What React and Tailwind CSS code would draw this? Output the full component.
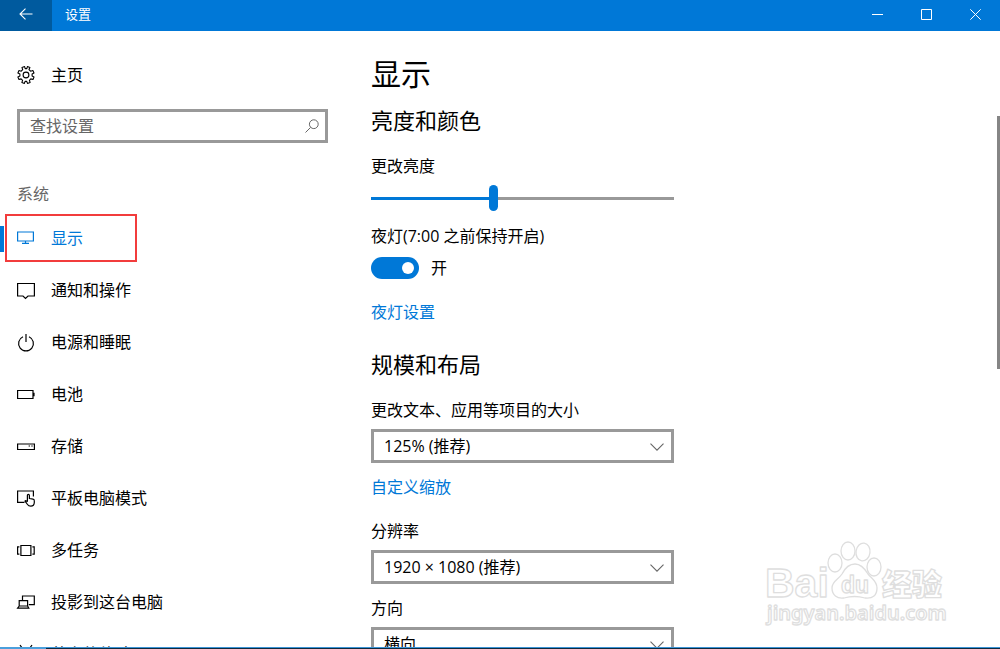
import { useState } from 'react'

const Icon = ({ children, className = '' }) => (
  <svg
    width="20"
    height="20"
    viewBox="0 0 20 20"
    fill="none"
    stroke="currentColor"
    strokeWidth="1.2"
    className={`shrink-0 ${className}`}
    aria-hidden="true"
  >
    {children}
  </svg>
)

const GearIcon = () => (
  <Icon>
    <path
      strokeLinejoin="round"
      strokeWidth="1.1"
      d="M8.6 1.6 L9.2 3.6 L10.8 3.6 L11.4 1.6 L13.9 2.6 L13 4.6 L14.6 6.2 L16.9 5.5 L18 7.9 L16.1 8.9 L16.1 11 L18 12 L17 14.5 L14.8 13.9 L13.4 15.3 L14.1 17.4 L11.5 18.4 L10.7 16.4 L9.1 16.4 L8.4 18.4 L5.9 17.4 L6.6 15.3 L5.1 13.9 L3 14.5 L1.9 12 L3.9 11 L3.9 8.9 L1.9 7.9 L3 5.5 L5.2 6.2 L6.7 4.6 L6 2.6 Z"
    />
    <circle cx="10" cy="10" r="2.9" strokeWidth="1.1" />
  </Icon>
)

const menu = [
  {
    name: '显示',
    icon: <path d="M1.6 4 H17.4 V13 H1.6 Z M9.5 13 V15 M6 15.3 H13" />,
  },
  {
    name: '通知和操作',
    icon: <path d="M1.6 3.5 H18.4 V16 H12 L9.5 18.5 L7 16 H1.6 Z" />,
  },
  {
    name: '电源和睡眠',
    icon: <path d="M7 4.7 A7.4 7.4 0 1 0 13 4.7 M10 2 V10" />,
  },
  {
    name: '电池',
    icon: <path d="M1.6 6.5 H17 V14.5 H1.6 Z M18 8.8 V12.2" />,
  },
  {
    name: '存储',
    icon: (
      <>
        <path d="M1.6 8 H18.4 V13.5 H1.6 Z" />
        <path d="M12.6 10 H14 M15.3 10 H16.7" />
      </>
    ),
  },
  {
    name: '平板电脑模式',
    icon: (
      <>
        <path d="M8.5 14.3 H1.6 V3 H17.4 V8.5" />
        <path
          strokeLinejoin="round"
          d="M11.4 13.7 V7.4 Q11.4 6.3 12.4 6.3 Q13.4 6.3 13.4 7.4 V10.5 L17 11.2 Q18.4 11.5 18.3 12.9 V14.5 Q18.2 18.1 14.8 18.1 Q12.6 18.1 11.5 16.5 L9 13.1 Q9.6 12.1 11.4 13.7"
        />
      </>
    ),
  },
  {
    name: '多任务',
    icon: <path d="M4.9 5.5 H14.9 V15.5 H4.9 Z M3.4 6.8 H1.6 V14.2 H3.4 M16.4 6.8 H18.2 V14.2 H16.4" />,
  },
  {
    name: '投影到这台电脑',
    icon: (
      <>
        <path d="M6.5 8 V4 H18.3 V12.6 H12.8" />
        <path d="M3.2 8.6 H11.6 V14 H3.2 Z M3.2 14 L1.6 16.2 H12.8 L11.6 14" />
      </>
    ),
  },
  {
    name: '共享的体验',
    icon: <path d="M4 1 L16 18 M16 1 L4 18" />,
  },
]

const Dropdown = ({ id, label, options }) => (
  <>
    <label htmlFor={id} className="block leading-6">
      {label}
    </label>
    <div className="relative mt-[7px]">
      <select
        id={id}
        className="block h-[34px] w-full appearance-none border-3 border-[#999999] bg-white pl-2.5 pr-10 leading-6 outline-none"
      >
        {options.map((option) => (
          <option key={option}>{option}</option>
        ))}
      </select>
      <svg
        width="14"
        height="8"
        viewBox="0 0 14 8"
        fill="none"
        stroke="#666"
        strokeWidth="1.1"
        className="pointer-events-none absolute right-[10px] top-[14px]"
        aria-hidden="true"
      >
        <path d="M0.5 0.7 L7 7.2 L13.5 0.7" />
      </svg>
    </div>
  </>
)

const Watermark = () => (
  <svg
    width="190"
    height="92"
    viewBox="0 0 190 92"
    className="pointer-events-none absolute bottom-[17px] right-[50px]"
    fill="#fff"
    stroke="#dedede"
    strokeWidth="1.3"
    strokeLinejoin="round"
  >
    <text x="5" y="59" fontFamily="'Liberation Sans', sans-serif" fontWeight="700" fontSize="41">
      Bai
    </text>
    <g>
      <ellipse cx="75" cy="25" rx="7" ry="9" />
      <ellipse cx="88" cy="13" rx="7" ry="9" />
      <ellipse cx="103" cy="14" rx="7" ry="9" transform="rotate(8 103 14)" />
      <ellipse cx="114" cy="29" rx="7" ry="9" />
      <path d="M95 26 C89 26 85 30 82 36 C78 42 72 43 72 50 C72 57 77 61 84 60 C91 58 98 58 105 60 C113 61 117 57 117 50 C117 43 112 41 108 36 C105 31 101 26 95 26 Z" />
    </g>
    <text x="81" y="55" fontFamily="'Liberation Sans', sans-serif" fontWeight="700" fontSize="23">
      du
    </text>
    <text x="122" y="57" fontFamily="'Noto Sans CJK SC', sans-serif" fontWeight="900" fontSize="30">
      经验
    </text>
    <text x="7" y="82" fontFamily="'Noto Sans', sans-serif" fontWeight="600" fontSize="20">
      jingyan.baidu.com
    </text>
  </svg>
)

const App = () => {
  const [brightness, setBrightness] = useState(40)
  const [nightLight, setNightLight] = useState(true)
  const [active, setActive] = useState('显示')

  return (
    <div className="flex h-screen flex-col overflow-hidden bg-white font-['Open_Sans','Noto_Sans_CJK_SC',sans-serif] text-[16px] text-black">
      <header className="flex h-[31px] shrink-0 items-stretch bg-[#0078d7] text-white">
        <button aria-label="返回" className="flex w-[52px] items-center justify-center bg-[#005a9e] pb-1">
          <svg width="14" height="12" viewBox="0 0 14 12" fill="none" stroke="currentColor" strokeWidth="1.1">
            <path d="M13.5 6 H1 M6.5 0.6 L1 6 L6.5 11.4" />
          </svg>
        </button>
        <h2 className="flex-1 pl-[13px] text-[13px] leading-7">设置</h2>
        <button aria-label="最小化" className="flex w-[49px] items-center justify-center pb-[3px]">
          <svg width="11" height="11" viewBox="0 0 11 11" stroke="currentColor">
            <path d="M0 5.5 H11" />
          </svg>
        </button>
        <button aria-label="最大化" className="flex w-[49px] items-center justify-center pb-[3px]">
          <svg width="11" height="11" viewBox="0 0 11 11" fill="none" stroke="currentColor">
            <path d="M0.5 0.5 H10.5 V10.5 H0.5 Z" />
          </svg>
        </button>
        <button aria-label="关闭" className="flex w-[49px] items-center justify-center pb-[3px]">
          <svg width="11" height="11" viewBox="0 0 11 11" stroke="currentColor">
            <path d="M0.3 0.3 L10.7 10.7 M10.7 0.3 L0.3 10.7" />
          </svg>
        </button>
      </header>

      <div className="relative flex min-h-0 flex-1">
        <aside className="w-[345px] shrink-0 overflow-hidden">
          <a href="#home" className="mt-8 flex h-6 items-center gap-[15px] pl-4">
            <GearIcon />
            主页
          </a>
          <div className="relative ml-[17px] mr-[17px] mt-[22px]">
            <input
              type="text"
              aria-label="查找设置"
              placeholder="查找设置"
              className="block h-[34px] w-full border-3 border-[#999999] pl-2.5 pr-9 leading-6 outline-none placeholder:text-[#666666]"
            />
            <svg
              width="14"
              height="14"
              viewBox="0 0 14 14"
              fill="none"
              stroke="#666"
              className="pointer-events-none absolute right-[9px] top-[10px]"
              aria-hidden="true"
            >
              <circle cx="8.8" cy="5.2" r="4.4" />
              <path d="M5.6 8.4 L0.5 13.5" />
            </svg>
          </div>

          <h3 className="mt-[39px] pl-[17px] leading-6 text-[#666666]">系统</h3>
          <nav className="mt-1.5">
            {menu.map((item) => (
              <a
                key={item.name}
                href={`#${item.name}`}
                onClick={() => setActive(item.name)}
                className={`relative flex h-[52px] items-center gap-[15px] pl-4 ${active === item.name ? 'text-[#0078d7]' : ''}`}
              >
                {active === item.name && (
                  <>
                    <span className="absolute left-0 top-[14px] h-[26px] w-1 bg-[#0078d7]" />
                    <span className="absolute left-[5px] top-0.5 h-12 w-[132px] border-2 border-[#f23c3c]" />
                  </>
                )}
                <Icon>{item.icon}</Icon>
                {item.name}
              </a>
            ))}
          </nav>
        </aside>

        <main className="min-w-0 flex-1 overflow-hidden pl-[26px] pt-[23px]">
          <div className="max-w-[303px]">
            <h1 className="text-[30px] leading-10">显示</h1>

            <section className="mt-2.5">
              <h2 className="text-[22px] leading-8">亮度和颜色</h2>
              <label htmlFor="brightness" className="mt-[18px] block leading-6">
                更改亮度
              </label>
              <input
                id="brightness"
                type="range"
                value={brightness}
                onChange={(e) => setBrightness(Number(e.target.value))}
                style={{
                  backgroundImage: `linear-gradient(to right, #0078d7 ${brightness}%, #999999 ${brightness}%)`,
                }}
                className="mt-[7px] block h-[26px] w-full appearance-none bg-[length:100%_3px] bg-center bg-no-repeat outline-none [&::-webkit-slider-thumb]:h-[26px] [&::-webkit-slider-thumb]:w-[9px] [&::-webkit-slider-thumb]:appearance-none [&::-webkit-slider-thumb]:rounded-full [&::-webkit-slider-thumb]:bg-[#0078d7]"
              />
              <p className="mt-[13px] leading-6">夜灯(7:00 之前保持开启)</p>
              <label className="mt-2 flex h-6 items-center gap-3">
                <input
                  type="checkbox"
                  role="switch"
                  checked={nightLight}
                  onChange={(e) => setNightLight(e.target.checked)}
                  className="flex h-[22px] w-12 appearance-none items-center rounded-full bg-[#999999] px-[5px] before:size-3 before:rounded-full before:bg-white checked:justify-end checked:bg-[#0078d7]"
                />
                {nightLight ? '开' : '关'}
              </label>
              <a href="#night-light" className="mt-5 block leading-6 text-[#0078d7]">
                夜灯设置
              </a>
            </section>

            <section className="mt-6">
              <h2 className="mb-[18px] text-[22px] leading-8">规模和布局</h2>
              <Dropdown
                id="scale"
                label="更改文本、应用等项目的大小"
                options={['125% (推荐)', '100%', '150%', '175%']}
              />
              <a href="#custom-scale" className="mb-5 mt-3 block leading-6 text-[#0078d7]">
                自定义缩放
              </a>
              <Dropdown id="resolution" label="分辨率" options={['1920 × 1080 (推荐)', '1600 × 900', '1366 × 768']} />
              <div className="mt-3">
                <Dropdown id="orientation" label="方向" options={['横向', '纵向']} />
              </div>
            </section>
          </div>
        </main>

        <div className="absolute right-0 top-[85px] h-[253px] w-[3px] bg-[#858585]" />
        <Watermark />
      </div>

      <footer className="flex h-[2px] shrink-0">
        <div className="w-[46px] bg-[#4a9fdc]" />
        <div className="flex-1 border-t border-[#3b93d6] bg-[#0b2a3f]" />
      </footer>
    </div>
  )
}

export default App
